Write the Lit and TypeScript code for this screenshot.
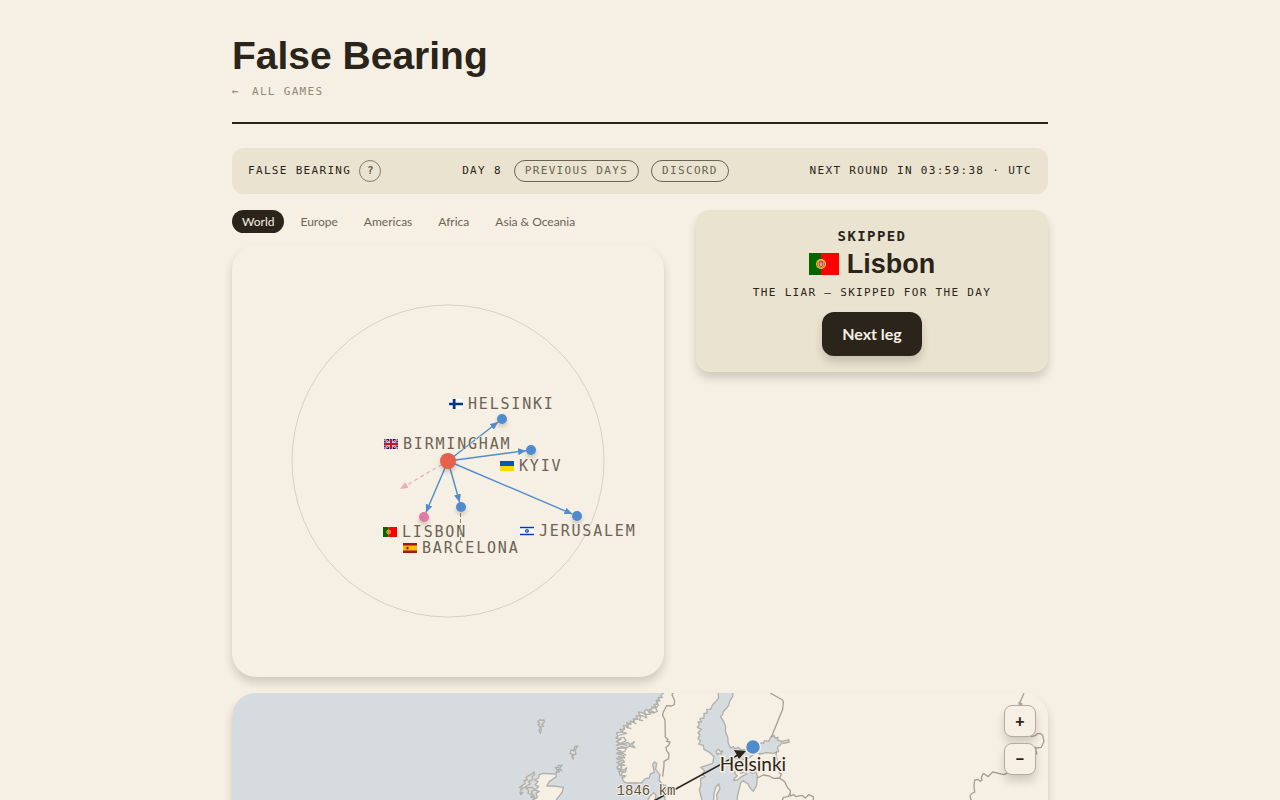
import { LitElement, html, css, svg } from "lit";
import { customElement, state } from "lit/decorators.js";

const ptShield = svg`
  <circle cx="12" cy="11" r="5" fill="#e8d20c"></circle>
  <circle cx="12" cy="11" r="3.6" fill="none" stroke="#8a6a10" stroke-width=".7"></circle>
  <path d="M7.6 9.2 16.4 12.8M7.6 12.8 16.4 9.2" stroke="#b08a10" stroke-width=".6"></path>
  <path d="M9.4 8h5.2v3.6a2.6 2.6 0 0 1-5.2 0z" fill="#e11" stroke="#fff" stroke-width=".4"></path>
  <path d="M10.7 9.4h2.6v2a1.3 1.3 0 0 1-2.6 0z" fill="#fff"></path>
  <path d="M12 9.4v3M10.8 10.9h2.4" stroke="#2b4fa3" stroke-width=".5"></path>`;

/* Each flag is drawn in a 30x22 box. */
const flags: Record<string, unknown> = {
  pt: svg`<path d="M0 0h12v22H0z" fill="#060"></path><path d="M12 0h18v22H12z" fill="#f00"></path>${ptShield}`,
  fi: svg`<path d="M0 0h30v22H0z" fill="#fff"></path><path d="M8 0h6v22H8zM0 8h30v6H0z" fill="#003580"></path>`,
  gb: svg`<path d="M0 0h30v22H0z" fill="#012169"></path>
    <path d="M0 0 30 22M30 0 0 22" stroke="#fff" stroke-width="4"></path>
    <path d="M0 0 30 22M30 0 0 22" stroke="#c8102e" stroke-width="2"></path>
    <path d="M15 0v22M0 11h30" stroke="#fff" stroke-width="7"></path>
    <path d="M15 0v22M0 11h30" stroke="#c8102e" stroke-width="4.6"></path>`,
  ua: svg`<path d="M0 0h30v11H0z" fill="#0057b8"></path><path d="M0 11h30v11H0z" fill="#ffd700"></path>`,
  es: svg`<path d="M0 0h30v22H0z" fill="#aa151b"></path><path d="M0 5.5h30v11H0z" fill="#f1bf00"></path>
    <path d="M6 8h1v6H6zM12 8h1v6h-1z" fill="#aa6a50"></path><path d="M7.6 8.4h3.8v4a1.9 1.9 0 0 1-3.8 0z" fill="#ad1519"></path>`,
  il: svg`<path d="M0 0h30v22H0z" fill="#fff"></path><path d="M0 1.6h30v3.4H0zM0 17h30v3.4H0z" fill="#0038b8"></path>
    <path d="m15 6.5 4 6.5h-8zM15 15.5l4-6.5h-8z" fill="none" stroke="#0038b8" stroke-width="1.4"></path>`,
};

interface City {
  name: string;
  flag: string;
  x: number;
  y: number;
  labelX: number;
  labelY: number;
  color: string;
}

const HUB = { x: 216, y: 216 };
const cities: City[] = [
  { name: "HELSINKI", flag: "fi", x: 270, y: 174, labelX: 236, labelY: 164, color: "#4f8ccf" },
  { name: "KYIV", flag: "ua", x: 299, y: 205, labelX: 287, labelY: 226, color: "#4f8ccf" },
  { name: "JERUSALEM", flag: "il", x: 345, y: 271, labelX: 307, labelY: 291, color: "#4f8ccf" },
  { name: "BARCELONA", flag: "es", x: 229, y: 262, labelX: 190, labelY: 308, color: "#4f8ccf" },
  { name: "LISBON", flag: "pt", x: 192, y: 272, labelX: 170, labelY: 292, color: "#dc7aa8" },
];

const SEA_WEST =
  "M-820 20H494L490 40 482 47 487 52 474 54 480 63 468 62 474 72 462 74 470 84 456 80 452 92 462 97 448 98 440 88 433 95 438 104 425 98 415 96 421 108 408 108 414 118 400 116 404 128 390 123 393 134 380 128 384 140 370 136 374 148 360 148 366 157 349 158 354 168 348 174 362 179 349 184 360 190 349 196 384 187 390 194 403 185 397 194 405 203 388 198 376 205 365 200 350 208 364 214 349 220 370 226 374 234 356 230 349 236 368 242 349 247 375 256 356 256 350 264 372 270 380 263 376 277 356 274 360 286 378 288 366 293 371 304 380 309H424L436 296 447 294 452 281 463 277 458 252 464 246 470 250 467 268 480 284 477 300 486 312 500 318 494 340 500 500H-820Z";
const FJORDS =
  "M478 50 470 68 476 76 466 84 472 94 458 100M462 84 446 90 452 102 436 104 440 114 424 106M424 104 418 120 430 122M408 116 396 126 410 132M392 128 380 142 394 146M374 142 366 156 380 160 356 166M352 176 372 172 378 182 362 190 380 196M352 204 380 204 374 214 354 220M356 226 366 218 378 226M354 240 362 232 374 246 356 252 366 262 354 268 370 276 362 284 374 292";
const SCOTLAND =
  "M118 284 128 280 168 282 169 290 148 305 140 318 160 318 190 322 187 336 170 358 166 400H108L112 372 98 360 112 352 108 340 118 334 104 330 116 320 106 314 114 304 104 300 116 294Z";
const ISLES = [
  "M102 276 103 284 96 290 98 298 86 304 90 312 74 322 62 331 66 320 58 322 76 310 72 302 82 300 78 292 92 284Z",
  "M60 336 68 338 62 344ZM78 324 96 322 104 330 94 334 98 344 84 340 86 332ZM92 350 102 346 104 356Z",
  "M166 262 174 262 175 256 187 256 178 264 186 272 174 268 178 276 168 278 172 270Z",
  "M213 210 222 212 224 200 233 198 225 212 228 222 219 225 220 238 216 232 216 222 210 220Z",
  "M113 124 122 118 124 122 132 120 133 126 125 134 131 138 122 140 124 148 121 160 117 150 122 144 114 134 120 132Z",
];
const BALTIC =
  "M652 20H702L698 49 690 62 685 78 669 96 668 104 661 110 671 124 677 140 676 154 683 172 685 190 692 204 700 200 704 206 716 202 722 210 740 208 756 222 770 208 784 188 790 190 794 182 806 184 812 172 822 166 826 174 834 172 832 180 846 184 866 179 868 186 852 190 846 188 840 196 832 202 836 214 820 220 800 218 780 222 768 218 750 232 730 238 722 246 718 262 736 260 748 274 758 280 768 276 772 288 770 316 760 334 750 324 744 312 730 302 722 308 718 325 712 350 708 500H594L606 360 598 330 602 318 602 296 616 290 606 284 614 272 602 262 638 250 642 230 630 218 612 208 610 196 596 192 602 182 594 176 600 164 594 158 604 148 592 142 598 134 594 126 604 126 600 116 612 114 612 100 622 100 620 88 632 88 638 74 648 64 656 54Z";
const BALTIC_ISLES = [
  "M702 277 716 272 722 280 734 276 740 282 724 290 712 300 700 302 704 294 712 288Z",
  "M648 214 656 208 662 216 668 212 664 222 656 220 652 224Z",
  "M656 312 648 320 642 340 640 370 652 370 650 344 660 326Z",
];
const BORDERS = [
  "M520 30 520 39 516 44 524 62 523 74 514 78 500 77 490 96 488 106 495 120 496 172 504 178 500 184 510 186 506 196 498 202 500 212 507 222 506 236 492 244 492 256 488 290",
  "M810 39 848 60 850 66 848 88 814 172",
  "M830 214 828 222 832 244 840 260 838 278 844 282 838 296",
  "M772 294 790 285 808 288 820 295 838 294 854 305 862 322 871 332 870 348 882 344 888 350 906 346 916 354 926 344 940 350 940 370",
  "M871 340 864 350 850 352 846 364",
  "M1572 40 1564 58 1556 74M1556 66 1566 72 1554 78",
  "M1592 170 1606 167 1612 161 1620 160 1628 166 1632 184 1624 202 1608 204 1604 212 1610 216 1610 222 1606 200",
  "M1536 272 1512 284 1478 276 1464 290 1450 280 1444 292 1446 300 1440 304 1434 298 1424 300 1422 318 1424 336 1414 342 1410 348 1414 362 1402 380",
];

@customElement("app-root")
export class AppRoot extends LitElement {
  @state() private region = "World";

  static styles = css`
    :host {
      --ink: #2b241b;
      --muted: #6b6355;
      --paper: #f6efe3;
      --panel: #eae3cf;
      --mono: "DejaVu Sans Mono", monospace;
      --round: Lato, sans-serif;
      --head: "Liberation Sans", sans-serif;
      --lift: 0 6px 8px rgba(43, 36, 27, 0.18);
      display: block;
      min-height: 100vh;
      background: var(--paper);
      color: var(--ink);
      font-family: var(--round);
    }
    * { box-sizing: border-box; }
    button { font: inherit; color: inherit; margin: 0; cursor: pointer; }
    .page { max-width: 864px; margin: 0 auto; padding: 32px 24px; }
    header { border-bottom: 2px solid var(--ink); padding-bottom: 23px; margin-bottom: 24px; }
    h1 { margin: 0; font: 700 39px/48px var(--head); }
    .back {
      display: flex;
      gap: 12px;
      margin-top: 5px;
      color: #8f8778;
      text-decoration: none;
      font: 11px/14px var(--mono);
      letter-spacing: 0.12em;
    }
    .bar {
      display: flex;
      justify-content: space-between;
      align-items: center;
      padding: 12px 16px;
      background: var(--panel);
      border-radius: 12px;
      font: 11px/20px var(--mono);
      letter-spacing: 0.12em;
    }
    .group { display: flex; align-items: center; gap: 12px; }
    .title { gap: 8px; }
    .pill {
      padding: 0 10px;
      border: 1px solid var(--muted);
      border-radius: 11px;
      background: none;
      color: var(--muted);
      letter-spacing: inherit;
      text-decoration: none;
    }
    .help {
      width: 22px;
      height: 22px;
      padding: 0;
      border: 1px solid #857c6c;
      border-radius: 50%;
      background: none;
      color: var(--muted);
      font-weight: 700;
      letter-spacing: 0;
    }
    .board { display: grid; grid-template-columns: minmax(0, 1fr) 352px; gap: 32px; align-items: start; margin: 16px 0; }
    .tabs { display: flex; gap: 6px; margin-bottom: 12px; }
    .tab {
      border: 0;
      border-radius: 12px;
      padding: 0 10px;
      background: none;
      color: var(--muted);
      font-size: 12px;
      line-height: 23px;
    }
    .tab.on { background: var(--ink); color: var(--paper); }
    .dial, .map { border-radius: 24px; box-shadow: var(--lift); }
    .chart { display: block; width: 100%; height: auto; }
    .label { font: 15px var(--mono); letter-spacing: 0.12em; fill: var(--muted); stroke: var(--paper); stroke-width: 1px; paint-order: stroke; }
    .dot { filter: drop-shadow(0 3px 2px rgba(43, 36, 27, 0.2)); }
    .card {
      display: flex;
      flex-direction: column;
      align-items: center;
      padding: 16px;
      border-radius: 14px;
      background: var(--panel);
      box-shadow: var(--lift);
    }
    .status { font: 700 14px/20px var(--mono); letter-spacing: 0.1em; }
    h2 { display: flex; align-items: center; gap: 8px; margin: 0; font: 700 27px/36px var(--head); }
    .flag { width: 30px; height: 22px; }
    .note { margin: 0 0 8px; font: 11px/22px var(--mono); letter-spacing: 0.12em; }
    .next {
      padding: 0 20px;
      border: 0;
      border-radius: 12px;
      background: var(--ink);
      color: var(--paper);
      font-weight: 700;
      font-size: 16px;
      line-height: 44px;
      box-shadow: var(--lift);
    }
    .map { position: relative; overflow: hidden; }
    .zoom { position: absolute; top: 12px; right: 12px; display: flex; flex-direction: column; gap: 6px; }
    .zoom button {
      width: 32px;
      height: 32px;
      padding: 0;
      border: 1px solid #b3ab9e;
      border-radius: 8px;
      background: var(--paper);
      font: 900 16px/28px var(--round);
      box-shadow: var(--lift);
    }
    .place { font: 19px var(--round); fill: var(--ink); stroke: var(--paper); stroke-width: 3px; paint-order: stroke; }
    .km { font: 14px "Liberation Mono", monospace; fill: #5b5346; stroke: var(--paper); stroke-width: 2px; paint-order: stroke; }
    @media (max-width: 800px) {
      .board { grid-template-columns: minmax(0, 1fr); }
      .bar { flex-wrap: wrap; gap: 12px; }
    }
  `;

  private flagAt(code: string, x: number, y: number) {
    return svg`<svg x=${x} y=${y} width="14" height="10" viewBox="0 0 30 22" preserveAspectRatio="none">${flags[code]}</svg>`;
  }

  private arrow(c: City) {
    const dx = c.x - HUB.x;
    const dy = c.y - HUB.y;
    const d = Math.hypot(dx, dy);
    const tip = (d - 5) / d;
    return svg`<line x1=${HUB.x} y1=${HUB.y} x2=${HUB.x + dx * tip} y2=${HUB.y + dy * tip}
      stroke="#4f8ccf" stroke-width="1.4" marker-end="url(#head)"></line>`;
  }

  private dial() {
    return html`<svg class="chart" viewBox="0 0 432 432" role="img" aria-label="Bearings from Birmingham">
      <defs>
        <marker id="head" markerUnits="userSpaceOnUse" markerWidth="10" markerHeight="8" refX="8" refY="3.5" orient="auto">
          <path d="M0 0 8 3.5 0 7z" fill="#4f8ccf"></path>
        </marker>
        <marker id="lie" markerUnits="userSpaceOnUse" markerWidth="10" markerHeight="8" refX="8" refY="3.5" orient="auto">
          <path d="M0 0 8 3.5 0 7z" fill="#edabb5"></path>
        </marker>
      </defs>
      <circle cx="216" cy="216" r="156" fill="none" stroke="#d9d0c1"></circle>
      <line x1="216" y1="216" x2="168" y2="244" stroke="#edabb5" stroke-width="1.2" stroke-dasharray="4 3" marker-end="url(#lie)"></line>
      <line x1="228.5" y1="262" x2="228.5" y2="296" stroke="#8d857a" stroke-dasharray="4 2"></line>
      ${cities.map((c) => this.arrow(c))}
      ${cities.map((c) => svg`<circle class="dot" cx=${c.x} cy=${c.y} r="5" fill=${c.color}></circle>`)}
      <circle class="dot" cx="216" cy="216" r="8" fill="#e7604b"></circle>
      ${cities.map((c) => svg`${this.flagAt(c.flag, c.labelX - 19, c.labelY - 10)}<text class="label" x=${c.labelX} y=${c.labelY}>${c.name}</text>`)}
      ${this.flagAt("gb", 152, 194)}<text class="label" x="171" y="204">BIRMINGHAM</text>
    </svg>`;
  }

  private map() {
    const coast = (d: string, fill: string) => svg`<path d=${d} fill=${fill} stroke="#b1b0aa" stroke-width="4" stroke-linejoin="round"></path>`;
    return html`<svg class="chart" viewBox="0 0 816 480" role="img" aria-label="Route map">
      <g transform="translate(268 -13) scale(.33333)">
        ${coast(SEA_WEST, "#d5dbde")}
        ${coast(FJORDS, "none")}
        ${coast(SCOTLAND, "#f6efe3")}
        ${ISLES.map((d) => coast(d, "#dfdfd9"))}
        ${coast(BALTIC, "#d5dbde")}
        ${BALTIC_ISLES.map((d) => coast(d, "#f6efe3"))}
        ${coast("M438 372 450 348 462 338 468 346 462 372Z", "#f6efe3")}
        ${BORDERS.map((d) => svg`<path d=${d} fill="none" stroke="#a79f94" stroke-width="4" stroke-linejoin="round"></path>`)}
      </g>
      <path d="M376 133 506 62" stroke="#2b241b" stroke-width="1.6"></path>
      <path d="M514 58 507 66 502 57z" fill="#2b241b"></path>
      <circle cx="521" cy="54" r="7.5" fill="#4f8ccf" stroke="#f6efe3" stroke-width="1.5"></circle>
      <text class="place" x="521" y="78" text-anchor="middle">Helsinki</text>
      <text class="km" x="414" y="102" text-anchor="middle">1846 km</text>
    </svg>`;
  }

  render() {
    const regions = ["World", "Europe", "Americas", "Africa", "Asia & Oceania"];
    return html`<div class="page">
      <header>
        <h1>False Bearing</h1>
        <a class="back" href="#"><span>←</span><span>ALL GAMES</span></a>
      </header>
      <div class="bar">
        <div class="group title"><span>FALSE BEARING</span><button class="help" aria-label="How to play">?</button></div>
        <div class="group">
          <span>DAY 8</span><button class="pill">PREVIOUS DAYS</button><a class="pill" href="#">DISCORD</a>
        </div>
        <span>NEXT ROUND IN 03:59:38 · UTC</span>
      </div>
      <main>
        <div class="board">
          <section>
            <div class="tabs">
              ${regions.map((r) => html`<button class="tab ${r === this.region ? "on" : ""}" @click=${() => (this.region = r)}>${r}</button>`)}
            </div>
            <div class="dial">${this.dial()}</div>
          </section>
          <section class="card">
            <div class="status">SKIPPED</div>
            <h2><svg class="flag" viewBox="0 0 30 22" aria-hidden="true">${flags.pt}</svg>Lisbon</h2>
            <p class="note">THE LIAR — SKIPPED FOR THE DAY</p>
            <button class="next">Next leg</button>
          </section>
        </div>
        <div class="map">
          ${this.map()}
          <div class="zoom"><button aria-label="Zoom in">+</button><button aria-label="Zoom out">−</button></div>
        </div>
      </main>
    </div>`;
  }
}
